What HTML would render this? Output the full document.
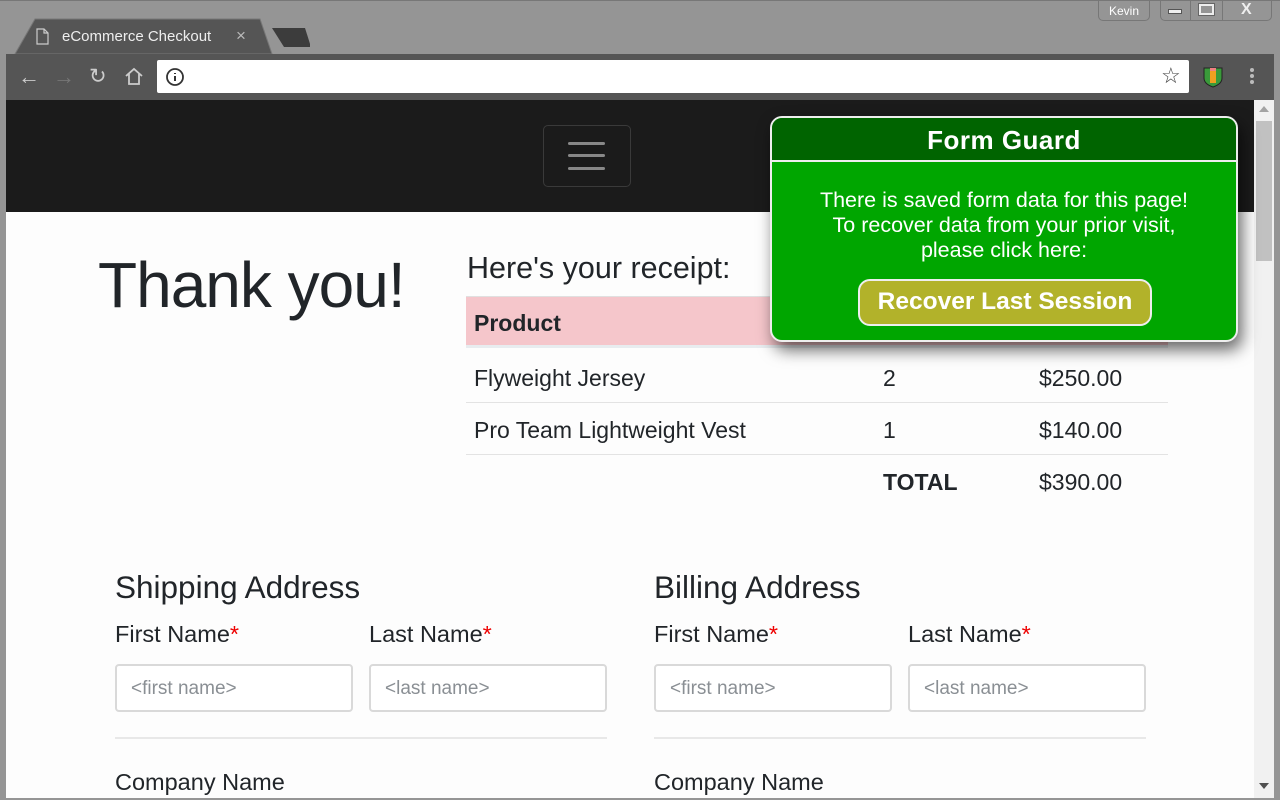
<!DOCTYPE html>
<html><head><meta charset="utf-8"><style>
*{margin:0;padding:0;box-sizing:border-box}
body{width:1280px;height:800px;overflow:hidden;background:#959595;font-family:"Liberation Sans",sans-serif;position:relative}
.a{position:absolute}
.t{color:#212529;white-space:nowrap}
.in{position:absolute;height:48px;border:2px solid #d9d9d9;border-radius:4px;background:#fff;color:#8a8f94;font-size:19px;padding:12px 14px}
.req{color:#e00}
</style></head><body>
<div class="a" style="left:0;top:0;width:1280px;height:54px;background:#959595;border-top:1px solid #777"></div>
<svg class="a" style="left:10px;top:18px" width="300" height="38"><path d="M5 36 L25 1 H250 L262 36 Z" fill="#555" stroke="#777"/><path d="M262 10 H295 L301 29 H274 Z" fill="#3c3c3c"/></svg>
<svg class="a" style="left:36px;top:28px" width="14" height="17"><path d="M1 1H8L12 5V16H1Z M8 1V5H12" fill="none" stroke="#ccc" stroke-width="1.2"/></svg>
<div class="a" style="left:62px;top:28px;font-size:15px;color:#eee">eCommerce Checkout</div>
<div class="a" style="left:236px;top:26px;font-size:17px;color:#bbb">×</div>
<div class="a" style="left:1098px;top:1px;width:52px;height:20px;border:1px solid #777;border-top:none;border-radius:0 0 5px 5px;font-size:12px;color:#fff;text-align:center;line-height:20px">Kevin</div>
<div class="a" style="left:1160px;top:1px;width:112px;height:20px;border:1px solid #777;border-top:none;border-radius:0 0 5px 5px"></div>
<div class="a" style="left:1190px;top:1px;width:1px;height:20px;background:#777"></div>
<div class="a" style="left:1222px;top:1px;width:1px;height:20px;background:#777"></div>
<div class="a" style="left:1168px;top:9px;width:14px;height:5px;background:#eee;border:1px solid #555"></div>
<div class="a" style="left:1199px;top:4px;width:15px;height:11px;border:2px solid #eee;box-shadow:0 0 0 1px #666"></div>
<div class="a" style="left:1241px;top:1px;font-size:16px;color:#eee;font-weight:bold">X</div>
<div class="a" style="left:6px;top:54px;width:1268px;height:46px;background:#555"></div>
<div class="a" style="left:18px;top:64px;font-size:22px;color:#ccc">←</div>
<div class="a" style="left:53px;top:64px;font-size:22px;color:#777">→</div>
<div class="a" style="left:89px;top:64px;font-size:21px;color:#ccc">↻</div>
<svg class="a" style="left:124px;top:67px" width="20" height="19"><path d="M2 9L10 2L18 9M5 7V17H15V7" fill="none" stroke="#ccc" stroke-width="1.8"/></svg>
<div class="a" style="left:157px;top:60px;width:1032px;height:33px;background:#fff;border-radius:2px"></div>
<svg class="a" style="left:165px;top:67px" width="20" height="20"><circle cx="10" cy="10" r="8" fill="none" stroke="#333" stroke-width="1.8"/><path d="M10 9V14M10 6V7" stroke="#333" stroke-width="2"/></svg>
<div class="a" style="left:1161px;top:63px;font-size:22px;color:#444">☆</div>
<svg class="a" style="left:1203px;top:66px" width="20" height="22"><path d="M1 2H19V12Q19 18 10 21Q1 18 1 12Z" fill="#3a9a3a" stroke="#222"/><rect x="7" y="2" width="6" height="15" fill="#f0a020"/><rect x="7" y="2" width="6" height="3" fill="#f08080"/></svg>
<div class="a" style="left:1250px;top:68px;width:4px;height:4px;background:#bbb;border-radius:2px;box-shadow:0 6px #bbb,0 12px #bbb"></div>
<div class="a" style="left:6px;top:100px;width:1248px;height:698px;background:#fdfdfd;overflow:hidden">
 <div class="a" style="left:0;top:0;width:1248px;height:112px;background:#1b1b1b"></div>
 <div class="a" style="left:537px;top:25px;width:88px;height:62px;border:1px solid #3a3a3a;border-radius:5px"></div>
 <div class="a" style="left:562px;top:42px;width:37px;height:3px;background:#888;border-radius:2px;box-shadow:0 12px #888,0 25px #888"></div>
 <div class="a t" style="left:92px;top:148px;font-size:64px;letter-spacing:-1px">Thank you!</div>
 <div class="a t" style="left:461px;top:151px;font-size:30.5px">Here's your receipt:</div>
 <div class="a" style="left:460px;top:196px;width:702px;height:52px;background:#f5c6cb;border-top:1px solid #e0e0e0;border-bottom:3px solid #e8ecef"></div>
 <div class="a t" style="left:468px;top:210px;font-size:23px;font-weight:bold">Product</div>
 <div class="a" style="left:460px;top:302px;width:702px;height:1px;background:#e3e3e3"></div>
 <div class="a" style="left:460px;top:354px;width:702px;height:1px;background:#e3e3e3"></div>
 <div class="a t" style="left:468px;top:265px;font-size:23px">Flyweight Jersey</div>
 <div class="a t" style="left:877px;top:265px;font-size:23px">2</div>
 <div class="a t" style="left:1033px;top:265px;font-size:23px">$250.00</div>
 <div class="a t" style="left:468px;top:317px;font-size:23px">Pro Team Lightweight Vest</div>
 <div class="a t" style="left:877px;top:317px;font-size:23px">1</div>
 <div class="a t" style="left:1033px;top:317px;font-size:23px">$140.00</div>
 <div class="a t" style="left:877px;top:369px;font-size:23px;font-weight:bold">TOTAL</div>
 <div class="a t" style="left:1033px;top:369px;font-size:23px">$390.00</div>
 <div class="a t" style="left:109px;top:469px;font-size:31.5px">Shipping Address</div>
 <div class="a t" style="left:648px;top:469px;font-size:31.5px">Billing Address</div>
 <div class="a t" style="left:109px;top:521px;font-size:23.5px">First Name<span class="req">*</span></div>
 <div class="a t" style="left:363px;top:521px;font-size:23.5px">Last Name<span class="req">*</span></div>
 <div class="a t" style="left:648px;top:521px;font-size:23.5px">First Name<span class="req">*</span></div>
 <div class="a t" style="left:902px;top:521px;font-size:23.5px">Last Name<span class="req">*</span></div>
 <div class="in" style="left:109px;top:564px;width:238px">&lt;first name&gt;</div>
 <div class="in" style="left:363px;top:564px;width:238px">&lt;last name&gt;</div>
 <div class="in" style="left:648px;top:564px;width:238px">&lt;first name&gt;</div>
 <div class="in" style="left:902px;top:564px;width:238px">&lt;last name&gt;</div>
 <div class="a" style="left:109px;top:637px;width:492px;height:2px;background:#e8e8e8"></div>
 <div class="a" style="left:648px;top:637px;width:492px;height:2px;background:#e8e8e8"></div>
 <div class="a t" style="left:109px;top:669px;font-size:23.5px">Company Name</div>
 <div class="a t" style="left:648px;top:669px;font-size:23.5px">Company Name</div>
</div>
<div class="a" style="left:1254px;top:100px;width:20px;height:698px;background:#f1f1f1"></div>
<div class="a" style="left:1256px;top:121px;width:16px;height:140px;background:#c1c1c1"></div>
<div class="a" style="left:1259px;top:106px;border:5px solid transparent;border-bottom:6px solid #a3a3a3;border-top:none"></div>
<div class="a" style="left:1259px;top:783px;border:5px solid transparent;border-top:6px solid #505050;border-bottom:none"></div>
<div class="a" style="left:770px;top:116px;width:468px;height:226px;border:2px solid #eee;border-radius:12px;background:#00a600;box-shadow:4px 8px 16px rgba(0,0,0,.6);overflow:hidden;color:#fff;text-align:center">
 <div style="height:44px;background:#006400;border-bottom:2px solid #eee;font-size:26px;font-weight:bold;line-height:44px;letter-spacing:0.5px">Form Guard</div>
 <div style="font-size:21.5px;line-height:25px;margin-top:26px">There is saved form data for this page!<br>To recover data from your prior visit,<br>please click here:</div>
 <div style="position:absolute;left:86px;top:161px;width:294px;height:47px;background:#b2b22a;border:2px solid #eee;border-radius:12px;font-size:24.5px;font-weight:bold;line-height:42px">Recover Last Session</div>
</div>
</body></html>
